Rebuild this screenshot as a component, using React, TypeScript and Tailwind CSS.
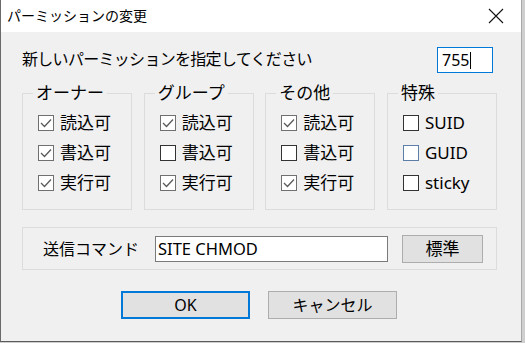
import React from "react";

const font = { fontFamily: '"Noto Sans", "Noto Sans CJK JP", sans-serif' };

type Item = { label: string; checked: boolean; focus?: boolean };

const groups: { title: string; items: Item[] }[] = [
  {
    title: "オーナー",
    items: [
      { label: "読込可", checked: true },
      { label: "書込可", checked: true },
      { label: "実行可", checked: true },
    ],
  },
  {
    title: "グループ",
    items: [
      { label: "読込可", checked: true },
      { label: "書込可", checked: false },
      { label: "実行可", checked: true },
    ],
  },
  {
    title: "その他",
    items: [
      { label: "読込可", checked: true },
      { label: "書込可", checked: false },
      { label: "実行可", checked: true },
    ],
  },
  {
    title: "特殊",
    items: [
      { label: "SUID", checked: false },
      { label: "GUID", checked: false, focus: true },
      { label: "sticky", checked: false },
    ],
  },
];

function CheckBox({ item }: { item: Item }) {
  return (
    <div className="flex h-[30px] items-center">
      <div
        className={
          "flex h-[16px] w-[16px] items-center justify-center bg-white border " +
          (item.checked
            ? "border-[#707070]"
            : item.focus
              ? "border-[#5b7fa6]"
              : "border-[#333333]")
        }
      >
        {item.checked && (
          <svg width="14" height="14" viewBox="0 0 14 14">
            <polyline
              points="2,7 5.5,10.5 12,3.5"
              fill="none"
              stroke="#5a5a5a"
              strokeWidth="1.3"
            />
          </svg>
        )}
      </div>
      <span className="ml-[6px] text-[17px] leading-[20px] text-black">{item.label}</span>
    </div>
  );
}

export default function App() {
  return (
    <div className="h-[343px] w-[525px] overflow-hidden bg-[#cfcfcf]" style={font}>
      <div className="flex h-[342px] w-[522px] flex-col border-b border-l border-r border-b-[#5a5a5a] border-l-[#6a6a6a] border-r-[#a8a8a8] bg-[#f0f0f0]">
        {/* title bar */}
        <div className="flex h-[32px] items-center bg-white">
          <span className="pl-[6px] text-[14px] leading-[20px] text-black">パーミッションの変更</span>
          <svg className="ml-auto mr-[17px]" width="16" height="16" viewBox="0 0 16 16">
            <path d="M1 1 L15 15 M15 1 L1 15" stroke="#111" strokeWidth="1.1" />
          </svg>
        </div>

        <div className="flex flex-col pl-[21px] pr-[24px]">
          {/* header row */}
          <div className="mt-[15px] flex h-[26px] items-center">
            <span className="mb-[3px] text-[16px] leading-[20px] tracking-[-0.7px] text-black">
              新しいパーミッションを指定してください
            </span>
            <div className="ml-auto mr-[4px] flex h-[26px] w-[56px] items-center border border-[#0078d7] bg-white pl-[4px]">
              <span className="text-[16px] leading-[20px] text-black">755</span>
              <span className="ml-[1px] h-[17px] w-[1px] bg-black" />
            </div>
          </div>

          {/* permission groups */}
          <div className="mt-[10px] flex justify-between">
            {groups.map((g) => (
              <fieldset
                key={g.title}
                className="m-0 h-[127px] w-[110px] border border-[#dcdcdc] p-0"
              >
                <legend className="ml-[10px] px-[3px] text-[17px] leading-[20px] text-black">
                  {g.title}
                </legend>
                <div className="flex flex-col pl-[15px] pt-[5px]">
                  {g.items.map((it) => (
                    <CheckBox key={it.label} item={it} />
                  ))}
                </div>
              </fieldset>
            ))}
          </div>

          {/* command */}
          <div className="mt-[17px] flex h-[43px] items-center border border-[#dcdcdc] pl-[20px]">
            <span className="w-[112px] text-[16px] leading-[20px] text-black">送信コマンド</span>
            <div className="flex h-[26px] w-[233px] items-center border border-[#7a7a7a] bg-white pl-[2px]">
              <span className="text-[16.5px] leading-[20px] text-black">SITE CHMOD</span>
            </div>
            <button className="ml-[14px] flex h-[28px] w-[81px] items-center justify-center border border-[#adadad] bg-[#e1e1e1] text-[17px] leading-[20px] text-black">
              標準
            </button>
          </div>

          {/* buttons */}
          <div className="mt-[21px] flex gap-[18px] pl-[99px]">
            <button className="flex h-[28px] w-[129px] items-center justify-center border-2 border-[#0078d7] bg-[#e1e1e1] text-[16px] leading-[20px] text-black">
              OK
            </button>
            <button className="flex h-[28px] w-[129px] items-center justify-center border border-[#adadad] bg-[#e1e1e1] text-[16px] leading-[20px] text-black">
              キャンセル
            </button>
          </div>
        </div>
      </div>
    </div>
  );
}
